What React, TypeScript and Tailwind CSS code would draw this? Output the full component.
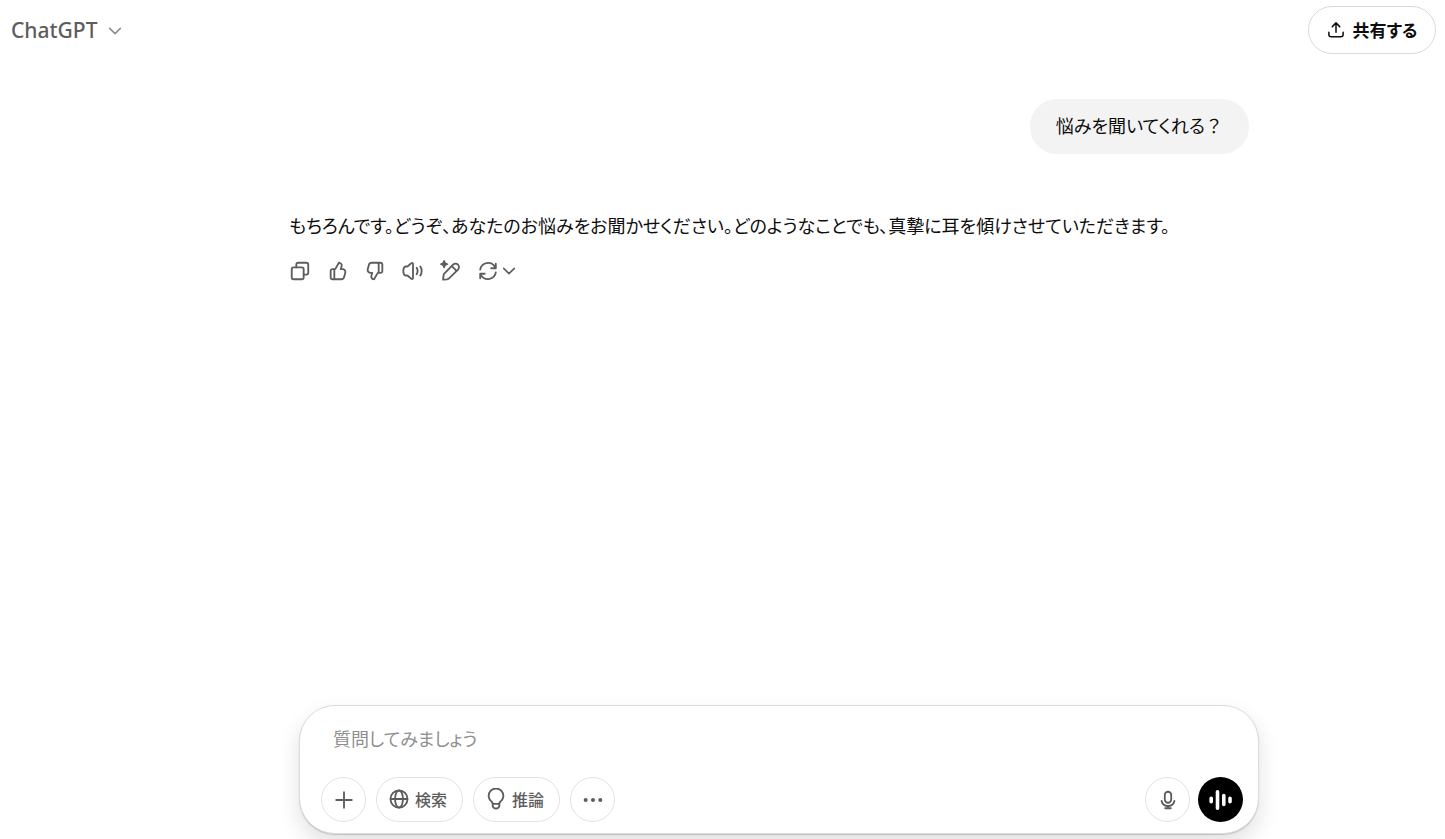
import type { ReactNode } from "react";

const THUMB =
  "M11.8727 21.4961C11.6725 21.8466 11.2811 22.0423 10.8805 21.9922L10.4267 21.9355C7.95958 21.6271 6.36855 19.1665 7.09975 16.7901L7.65054 15H6.93226C4.29476 15 2.37923 12.4921 3.0732 9.94753L4.43684 4.94753C4.91145 3.20728 6.49209 2 8.29589 2H18.0045C19.6614 2 21.0045 3.34315 21.0045 5V12C21.0045 13.6569 19.6614 15 18.0045 15H16.0045C15.745 15 15.5054 15.1391 15.3766 15.3644L11.8727 21.4961ZM14.0045 4H8.29589C7.39399 4 6.60367 4.60364 6.36637 5.47376L5.00273 10.4738C4.65574 11.746 5.61351 13 6.93226 13H9.00451C9.32185 13 9.62036 13.1506 9.8089 13.4059C9.99743 13.6612 10.0536 13.9908 9.96028 14.2941L9.01131 17.3782C8.6661 18.5002 9.35608 19.6596 10.4726 19.9153L13.6401 14.3721C13.9523 13.8258 14.4376 13.4141 15.0045 13.1902V5C15.0045 4.44772 14.5568 4 14.0045 4ZM17.0045 13V5C17.0045 4.64937 16.9444 4.31278 16.8338 4H18.0045C18.5568 4 19.0045 4.44772 19.0045 5V12C19.0045 12.5523 18.5568 13 18.0045 13H17.0045Z";

function Icon({ className, children }: { className: string; children: ReactNode }) {
  return (
    <svg
      viewBox="0 0 24 24"
      fill="none"
      stroke="currentColor"
      strokeWidth="2"
      strokeLinecap="round"
      strokeLinejoin="round"
      aria-hidden="true"
      className={`shrink-0 ${className}`}
    >
      {children}
    </svg>
  );
}

function Chevron({ className }: { className: string }) {
  return (
    <Icon className={className}>
      <path d="M4 8l8 8 8-8" strokeWidth="2.400" />
    </Icon>
  );
}

function ActionButton({ label, children }: { label: string; children: ReactNode }) {
  return (
    <button type="button" aria-label={label} className="flex h-8 flex-1 items-center">
      {children}
    </button>
  );
}

function MessageActions() {
  return (
    <div className="mt-3 flex w-[226px] text-[#5d5d5d]">
      <ActionButton label="コピーする">
        <Icon className="size-[22px]">
          <rect x="3" y="8" width="13" height="13" rx="2" />
          <path d="M8 8V5a2 2 0 0 1 2-2h9a2 2 0 0 1 2 2v9a2 2 0 0 1-2 2h-3" />
        </Icon>
      </ActionButton>
      <ActionButton label="良い回答です">
        <Icon className="size-[22px] rotate-180">
          <path d={THUMB} fill="currentColor" fillRule="evenodd" stroke="none" />
        </Icon>
      </ActionButton>
      <ActionButton label="よくない回答です">
        <Icon className="size-[22px]">
          <path d={THUMB} fill="currentColor" fillRule="evenodd" stroke="none" />
        </Icon>
      </ActionButton>
      <ActionButton label="音声で読み上げる">
        <Icon className="size-[22px]">
          <path d="M12 4.4v15.2c0 1-1 1.6-1.8 1l-3.6-3.2a2 2 0 0 0-1.3-.5H4a2 2 0 0 1-1.8-1.2c-1-2.4-1-5 0-7.4A2 2 0 0 1 4 7.100h1.300a2 2 0 0 0 1.300-.500l3.600-3.200c.800-.600 1.800 0 1.800 1z" />
          <path d="M16 8.500c1.300 2.200 1.300 4.800 0 7M20 7c1.900 3.200 1.900 6.800 0 10" />
        </Icon>
      </ActionButton>
      <ActionButton label="キャンバスで編集する">
        <Icon className="size-[22px]">
          <path d="M4.500.8c.4 2.500 1.200 3.300 3.700 3.700-2.500.4-3.300 1.200-3.700 3.700C4.100 5.700 3.300 4.900.8 4.500 3.300 4.100 4.100 3.300 4.500.8z" fill="currentColor" strokeWidth="1.500" />
          <path d="M14.300 5.100a3.700 3.700 0 0 1 5.300 5.300L9.900 20a4 4 0 0 1-2.200 1.100L3.400 21.400l.4-4.300a4 4 0 0 1 1.100-2.400z" />
          <path d="M12.800 6.600l5.300 5.300" />
        </Icon>
      </ActionButton>
      <ActionButton label="モデルを切り替える">
        <Icon className="size-[22px]">
          <path d="M3.500 10.500a8.700 8.700 0 0 1 15.800-3.400L20.500 9M20.500 4v5h-5" />
          <path d="M20.500 13.500a8.700 8.700 0 0 1-15.800 3.400L3.500 15M3.500 20v-5h5" />
        </Icon>
        <Chevron className="ml-[2px] -mr-2 size-4" />
      </ActionButton>
    </div>
  );
}

const pill =
  "flex h-[45px] items-center justify-center rounded-full border border-[#e3e3e3] bg-white text-[#5d5d5d]";

function Composer() {
  return (
    <form
      onSubmit={(e) => e.preventDefault()}
      className="w-full max-w-[960px] rounded-[36px] border border-[#dcdcdc] bg-white pt-[14px] pr-[15px] pb-[11px] pl-[21px] shadow-[0_10px_22px_rgba(0,0,0,0.12),0_1px_1px_rgba(0,0,0,0.16)]"
    >
      <input
        type="text"
        aria-label="質問してみましょう"
        placeholder="質問してみましょう"
        className="block h-9 w-full bg-transparent px-3 text-[18px] outline-none placeholder:text-[#8f8f8f]"
      />
      <div className="mt-[21px] flex items-center justify-between">
        <div className="flex gap-[10px]">
          <button type="button" aria-label="追加" className={`${pill} w-[45px]`}>
            <Icon className="size-[22px]">
              <path d="M12 3.500v17M3.500 12h17" />
            </Icon>
          </button>
          <button type="button" className={`${pill} w-[87px] gap-[5px] pr-1 pb-[2px] text-[16px] font-medium`}>
            <Icon className="size-[22px]">
              <circle cx="12" cy="12" r="9.300" />
              <ellipse cx="12" cy="12" rx="4.300" ry="9.300" />
              <path d="M3 12h18" />
            </Icon>
            検索
          </button>
          <button type="button" className={`${pill} w-[87px] gap-[5px] pr-1 pb-[2px] text-[16px] font-medium`}>
            <Icon className="size-[22px]">
              <path d="M8.500 17.300c0-1-.5-1.700-1.200-2.300a8 8 0 1 1 9.400 0c-.7.600-1.200 1.300-1.200 2.300" />
              <path d="M8.300 17.300h7.400v1.500a3.700 3.700 0 0 1-7.400 0z" />
            </Icon>
            推論
          </button>
          <button type="button" aria-label="その他" className={`${pill} w-[45px]`}>
            <Icon className="size-[22px]">
              <g fill="currentColor" stroke="none">
                <circle cx="4" cy="12" r="2.200" />
                <circle cx="12" cy="12" r="2.200" />
                <circle cx="20" cy="12" r="2.200" />
              </g>
            </Icon>
          </button>
        </div>
        <div className="flex gap-2">
          <button type="button" aria-label="音声入力" className={`${pill} w-[45px]`}>
            <Icon className="size-[22px]">
              <rect x="8.500" y="3" width="7" height="12" rx="3.500" />
              <path d="M5 13a7.200 7.200 0 0 0 14 0M12 18.500V21M9 21h6" />
            </Icon>
          </button>
          <button
            type="button"
            aria-label="音声モード"
            className="flex size-[45px] items-center justify-center rounded-full bg-black text-white"
          >
            <Icon className="size-6">
              <path d="M2.200 10.300v3.400M8.500 3.700v16.600M14.800 7.500v9M21 10.300v3.400" strokeWidth="3.600" />
            </Icon>
          </button>
        </div>
      </div>
    </form>
  );
}

export default function App() {
  return (
    <div className="flex min-h-screen flex-col bg-white font-['Noto_Sans_CJK_JP',sans-serif] text-[#0d0d0d] [font-feature-settings:'palt']">
      <header className="flex items-start justify-between pt-[6px] pr-[9px] pl-[11px]">
        <button
          type="button"
          className="flex h-[50px] items-center gap-[10px] font-['Noto_Sans',sans-serif] text-[21px] font-medium text-[#5d5d5d]"
        >
          ChatGPT
          <Chevron className="size-4 text-[#8f8f8f]" />
        </button>
        <button
          type="button"
          className="flex h-12 w-32 items-center justify-center gap-2 rounded-full border border-[#d9d9d9] text-[17px] font-bold"
        >
          <Icon className="size-[18px]">
            <path d="M12 15V3M7 7.500L12 2.500l5 5M2.500 15v3a3 3 0 0 0 3 3h13a3 3 0 0 0 3-3v-3" />
          </Icon>
          共有する
        </button>
      </header>

      <main className="flex flex-1 flex-col items-center pt-[43px] pl-[93px]">
        <div className="flex w-full max-w-[960px] flex-col">
          <p className="self-end rounded-[27px] bg-[#f3f3f3] px-[26px] pt-[11px] pb-[13px] text-[18px] leading-[31px]">
            悩みを聞いてくれる<span className="[font-feature-settings:normal]">？</span>
          </p>
          <p className="mt-[54px] text-[18px] leading-[35px]">
            もちろんです。どうぞ、あなたのお悩みをお聞かせください。どのようなことでも、真摯に耳を傾けさせていただきます。
          </p>
          <MessageActions />
        </div>
      </main>

      <footer className="flex justify-center pb-[5px] pl-[113px]">
        <Composer />
      </footer>
    </div>
  );
}
